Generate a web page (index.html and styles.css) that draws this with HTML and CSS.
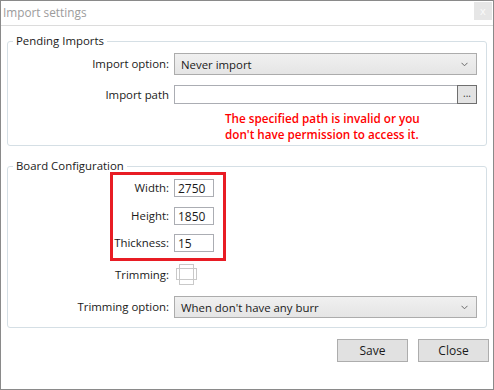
FILE: index.html
```html
<!DOCTYPE html>
<html lang="en">
  <head>
    <meta charset="UTF-8" />
    <title>Import settings</title>
    <link rel="stylesheet" href="styles.css">
  </head>
  <body>
    <div class="window">
      <div class="titlebar">
        <span class="title">Import settings</span>
        <span class="close-x">x</span>
      </div>

      <div class="content">
        <fieldset class="group">
          <legend>Pending Imports</legend>

          <div class="row first">
            <label>Import option:</label>
            <div class="combo">
              <span>Never import</span>
              <svg width="7" height="5" viewBox="0 0 7 5"><path d="M0.5 0.8 L3.5 3.8 L6.5 0.8" fill="none" stroke="#6a6a6a" stroke-width="1"/></svg>
            </div>
          </div>

          <div class="row path-row">
            <label>Import path</label>
            <div class="path">
              <input type="text" class="path-input" value="" />
              <button class="browse">...</button>
            </div>
          </div>

          <p class="error">The specified path is invalid or you<br>don't have permission to access it.</p>
        </fieldset>

        <fieldset class="group board">
          <legend>Board Configuration</legend>

          <div class="row size first">
            <label>Width:</label>
            <input type="text" class="num" value="2750" />
          </div>
          <div class="row size">
            <label>Height:</label>
            <input type="text" class="num" value="1850" />
          </div>
          <div class="row size thick">
            <label>Thickness:</label>
            <input type="text" class="num" value="15" />
          </div>

          <div class="row trim">
            <label>Trimming:</label>
            <svg class="check" width="21" height="21" viewBox="0 0 21 21">
              <rect x="0.5" y="4.5" width="20" height="11" fill="none" stroke="#c9c9c9"/>
              <rect x="3.5" y="0.5" width="14" height="20" fill="none" stroke="#c9c9c9"/>
            </svg>
          </div>

          <div class="row trim-option">
            <label>Trimming option:</label>
            <div class="combo">
              <span>When don't have any burr</span>
              <svg width="7" height="5" viewBox="0 0 7 5"><path d="M0.5 0.8 L3.5 3.8 L6.5 0.8" fill="none" stroke="#6a6a6a" stroke-width="1"/></svg>
            </div>
          </div>
        </fieldset>

        <div class="actions">
          <button class="btn">Save</button>
          <button class="btn">Close</button>
        </div>
      </div>

      <div class="highlight"></div>
    </div>
  </body>
</html>
```

FILE: styles.css
```css
body {
  margin: 0;
  font-family: "Open Sans", "Noto Sans", sans-serif;
  font-size: 11.4px;
  color: #1a1a1a;
  background: #fff;
}

.window {
  position: relative;
  width: 494px;
  height: 390px;
  box-sizing: border-box;
  border: 1px solid #8a8a8a;
  background: #fff;
}

.titlebar {
  display: flex;
  justify-content: space-between;
  align-items: flex-start;
  height: 24px;
  border-bottom: 1px solid #dcdcdc;
}

.title {
  color: #9c9c9c;
  font-size: 11.8px;
  line-height: 22px;
  padding-left: 2px;
}

.close-x {
  width: 18px;
  height: 18px;
  margin: 1px 1px 0 0;
  background: #e6e6e6;
  color: #fafafa;
  font-size: 11px;
  line-height: 17px;
  text-align: center;
}

.content {
  padding: 0 6px;
}

.group {
  margin: 7px 0 0;
  padding: 0 0 3px;
  border: 1px solid #d5dfe5;
  border-radius: 3px;
  min-width: 0;
}

.group legend {
  margin-left: 5px;
  padding: 0 3px;
  line-height: 16px;
}

.board {
  margin-top: 12px;
  padding-bottom: 9px;
}

.row {
  display: flex;
  align-items: center;
}

.row label {
  width: 161px;
  margin-right: 5px;
  text-align: right;
  flex: none;
  line-height: 16px;
}

.row.first {
  margin-top: 4px;
}

.combo {
  display: flex;
  align-items: center;
  justify-content: space-between;
  width: 303px;
  height: 22px;
  box-sizing: border-box;
  padding: 0 8px 0 6px;
  border: 1px solid #acacac;
  background: linear-gradient(#f0f0f0, #e5e5e5);
}

.path-row {
  margin-top: 10px;
}

.path {
  display: flex;
  width: 303px;
}

.path-input {
  flex: 1;
  height: 19px;
  box-sizing: border-box;
  margin: 0;
  border: 1px solid #abadb3;
  border-right: none;
  font: inherit;
}

.browse {
  width: 20px;
  height: 19px;
  box-sizing: border-box;
  margin: 0;
  padding: 0 0 4px;
  border: 1px solid #6f6f6f;
  background: #e3e3e3;
  font: inherit;
  font-size: 10px;
  line-height: 10px;
  color: #333;
}

.error {
  margin: 6px 0 0 217px;
  color: #ff0000;
  font-size: 11.7px;
  font-weight: 600;
  line-height: 16px;
}

.size .num {
  width: 40px;
  height: 18px;
  box-sizing: border-box;
  margin: 0;
  padding: 0 3px;
  border: 1px solid #abadb3;
  font: inherit;
  font-size: 12px;
  color: #1a1a1a;
}

.size {
  margin-top: 10px;
}

.size.first {
  margin-top: 5px;
}

.size.thick {
  margin-top: 9px;
}

.trim {
  margin-top: 12px;
}

.check {
  margin-left: 2px;
}

.trim-option {
  margin-top: 11px;
}

.actions {
  display: flex;
  justify-content: flex-end;
  gap: 10px;
  margin: 11px -2px 0 0;
}

.btn {
  width: 71px;
  height: 23px;
  margin: 0;
  border: 1px solid #adadad;
  background: #e1e1e1;
  font: inherit;
  font-size: 12px;
  color: #1a1a1a;
}

.highlight {
  position: absolute;
  left: 109px;
  top: 171px;
  width: 116px;
  height: 89px;
  box-sizing: border-box;
  border: 3px solid #e81c24;
}
```
